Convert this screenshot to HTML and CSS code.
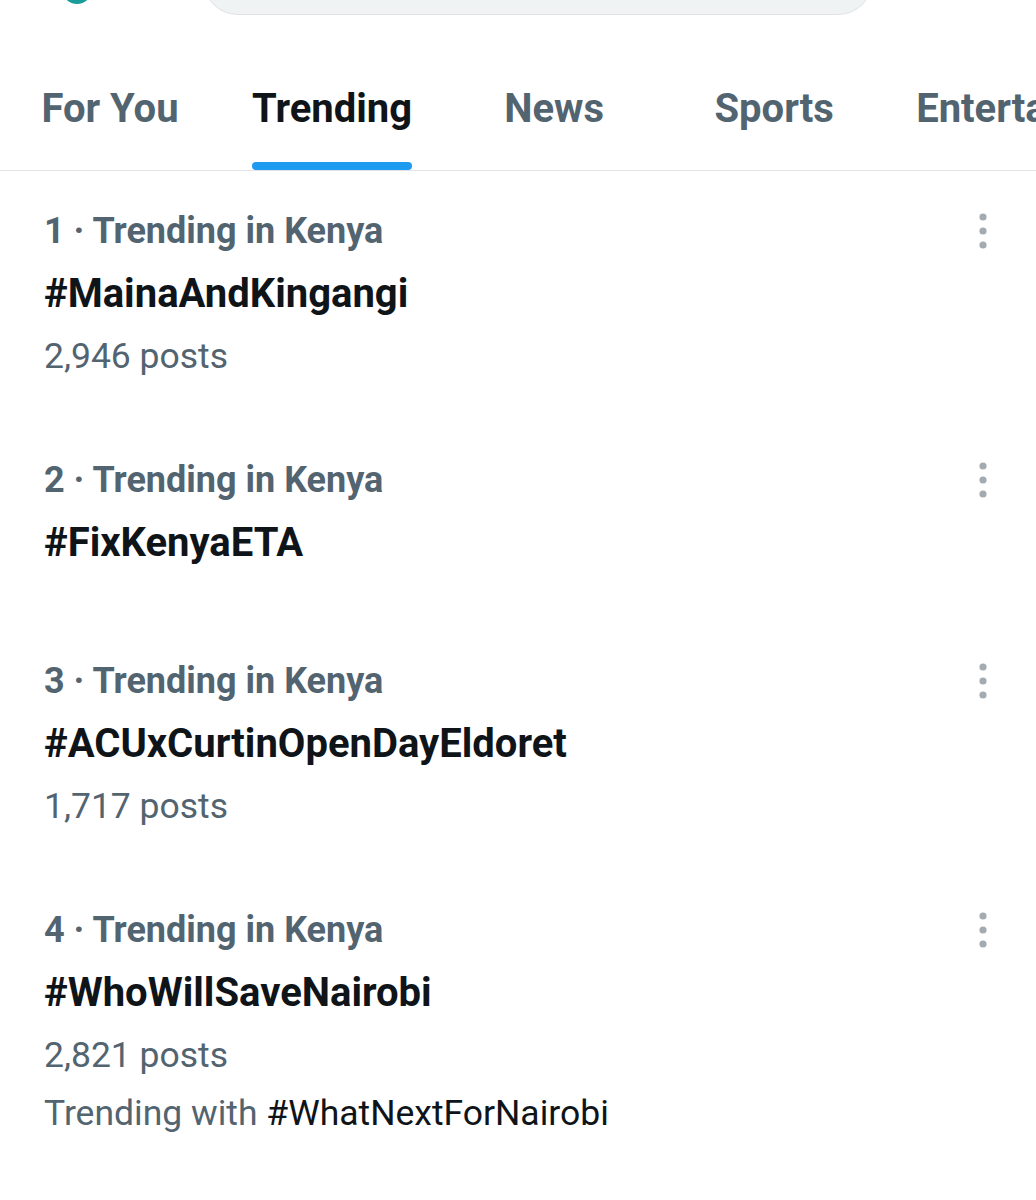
FILE: index.html
```html
<!DOCTYPE html>
<html lang="en">
<head>
<meta charset="utf-8">
<title>Explore - Trending</title>
<link rel="stylesheet" href="styles.css">
</head>
<body>
<div class="app">
  <header class="topbar">
    <div class="avatar"></div>
    <div class="search"></div>
  </header>
  <nav class="tabs">
    <div class="tab">For You</div>
    <div class="tab active"><span class="tab-label">Trending</span></div>
    <div class="tab">News</div>
    <div class="tab">Sports</div>
    <div class="tab">Entertainment</div>
  </nav>
  <main class="list">
    <section class="trend">
      <div class="trend-body">
        <div class="meta">1 · Trending in Kenya</div>
        <div class="tag">#MainaAndKingangi</div>
        <div class="count">2,946 posts</div>
      </div>
      <svg class="more" viewBox="0 0 10 36" width="10" height="36"><circle cx="5" cy="4" r="3.6"/><circle cx="5" cy="18" r="3.6"/><circle cx="5" cy="32" r="3.6"/></svg>
    </section>
    <section class="trend">
      <div class="trend-body">
        <div class="meta">2 · Trending in Kenya</div>
        <div class="tag">#FixKenyaETA</div>
      </div>
      <svg class="more" viewBox="0 0 10 36" width="10" height="36"><circle cx="5" cy="4" r="3.6"/><circle cx="5" cy="18" r="3.6"/><circle cx="5" cy="32" r="3.6"/></svg>
    </section>
    <section class="trend">
      <div class="trend-body">
        <div class="meta">3 · Trending in Kenya</div>
        <div class="tag">#ACUxCurtinOpenDayEldoret</div>
        <div class="count">1,717 posts</div>
      </div>
      <svg class="more" viewBox="0 0 10 36" width="10" height="36"><circle cx="5" cy="4" r="3.6"/><circle cx="5" cy="18" r="3.6"/><circle cx="5" cy="32" r="3.6"/></svg>
    </section>
    <section class="trend">
      <div class="trend-body">
        <div class="meta">4 · Trending in Kenya</div>
        <div class="tag">#WhoWillSaveNairobi</div>
        <div class="count">2,821 posts</div>
        <div class="with">Trending with <span class="with-tag">#WhatNextForNairobi</span></div>
      </div>
      <svg class="more" viewBox="0 0 10 36" width="10" height="36"><circle cx="5" cy="4" r="3.6"/><circle cx="5" cy="18" r="3.6"/><circle cx="5" cy="32" r="3.6"/></svg>
    </section>
  </main>
</div>
</body>
</html>
```

FILE: styles.css
```css
html, body {
  margin: 0;
  padding: 0;
  background: #ffffff;
}
body {
  font-family: Roboto, "Liberation Sans", Arial, sans-serif;
  color: #0f1419;
  overflow: hidden;
}
.app {
  width: 1036px;
  overflow: hidden;
}
.topbar {
  display: flex;
  align-items: flex-end;
  height: 15px;
  position: relative;
}
.avatar {
  width: 30px;
  height: 30px;
  border-radius: 50%;
  background: #1a9c9a;
  margin: 0 0 11px 62px;
  flex: none;
}
.search {
  flex: none;
  width: 670px;
  height: 70px;
  margin-left: 111px;
  background: #eff3f4;
  border: 1px solid #dfe3e6;
  border-radius: 36px;
  box-sizing: border-box;
}
.tabs {
  display: flex;
  margin-top: 55px;
  height: 100px;
  border-bottom: 1px solid #e2e5e8;
  white-space: nowrap;
}
.tab {
  flex: none;
  min-width: 220px;
  box-sizing: border-box;
  padding: 0 32px;
  text-align: center;
  font-size: 40px;
  font-weight: 700;
  color: #536471;
  line-height: 78px;
}
.tab.active {
  color: #0f1419;
}
.tab-label {
  display: inline-block;
  position: relative;
}
.tab-label::after {
  content: "";
  position: absolute;
  left: 0;
  right: 0;
  top: 92px;
  height: 8px;
  border-radius: 4px;
  background: #1d9bf0;
}
.trend {
  display: flex;
  justify-content: space-between;
  padding: 35px 0 40px 44px;
}
.meta {
  font-size: 36px;
  font-weight: 700;
  color: #536471;
  line-height: 50px;
}
.tag {
  font-size: 40px;
  font-weight: 700;
  color: #0f1419;
  line-height: 76px;
}
.count {
  font-size: 35.5px;
  color: #536471;
  line-height: 48px;
}
.with {
  font-size: 35.5px;
  color: #536471;
  line-height: 68px;
}
.with-tag {
  color: #0f1419;
}
.more {
  flex: none;
  fill: #a3abb1;
  margin: 7px 48px 0 0;
}
```
